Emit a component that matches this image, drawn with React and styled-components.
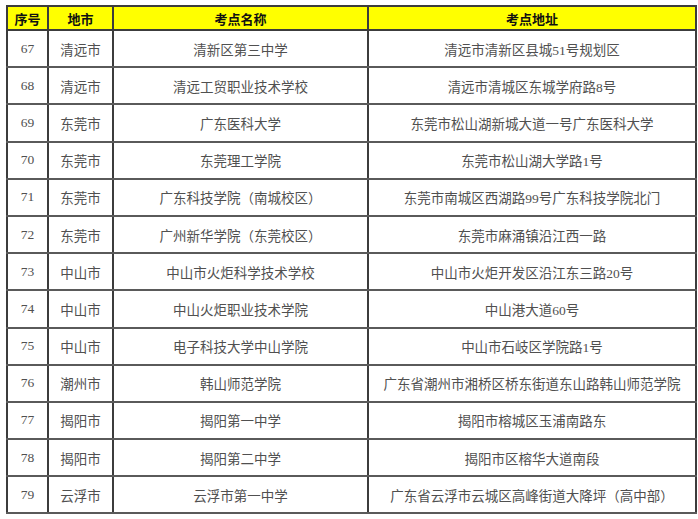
import React from 'react';
import styled, { createGlobalStyle } from 'styled-components';

const GlobalStyle = createGlobalStyle`
  html, body {
    margin: 0;
    padding: 0;
    background: #ffffff;
  }
`;

const Page = styled.div`
  padding: 5px 0 0 6px;
  width: 698px;
  height: 519px;
  box-sizing: border-box;
  font-family: 'Liberation Serif', 'Noto Sans CJK SC', serif;
`;

const Table = styled.table`
  border-collapse: collapse;
  table-layout: fixed;
  width: 689px;
`;

const Col = styled.col`
  width: ${(p) => p.$w}px;
`;

const HeadCell = styled.th`
  background: #ffff00;
  color: #111;
  font-weight: 700;
  font-size: 13px;
  height: 22px;
  padding: 0;
  border: 2px solid #3c3c3c;
  text-align: center;
  font-family: 'Noto Sans CJK SC', sans-serif;
`;

const Cell = styled.td`
  color: #505050;
  font-size: 13.5px;
  height: 35.2px;
  padding: 0;
  border: 2px solid #3c3c3c;
  border-top-color: #5a5a5a;
  border-bottom-color: #5a5a5a;
  text-align: center;
  white-space: nowrap;
  overflow: hidden;
`;

const columns = [
  { key: 'no', title: '序号', width: 41 },
  { key: 'city', title: '地市', width: 65 },
  { key: 'name', title: '考点名称', width: 255 },
  { key: 'addr', title: '考点地址', width: 328 },
];

const rows = [
  ['67', '清远市', '清新区第三中学', '清远市清新区县城51号规划区'],
  ['68', '清远市', '清远工贸职业技术学校', '清远市清城区东城学府路8号'],
  ['69', '东莞市', '广东医科大学', '东莞市松山湖新城大道一号广东医科大学'],
  ['70', '东莞市', '东莞理工学院', '东莞市松山湖大学路1号'],
  ['71', '东莞市', '广东科技学院（南城校区）', '东莞市南城区西湖路99号广东科技学院北门'],
  ['72', '东莞市', '广州新华学院（东莞校区）', '东莞市麻涌镇沿江西一路'],
  ['73', '中山市', '中山市火炬科学技术学校', '中山市火炬开发区沿江东三路20号'],
  ['74', '中山市', '中山火炬职业技术学院', '中山港大道60号'],
  ['75', '中山市', '电子科技大学中山学院', '中山市石岐区学院路1号'],
  ['76', '潮州市', '韩山师范学院', '广东省潮州市湘桥区桥东街道东山路韩山师范学院'],
  ['77', '揭阳市', '揭阳第一中学', '揭阳市榕城区玉浦南路东'],
  ['78', '揭阳市', '揭阳第二中学', '揭阳市区榕华大道南段'],
  ['79', '云浮市', '云浮市第一中学', '广东省云浮市云城区高峰街道大降坪（高中部）'],
];

export default function App() {
  return (
    <Page>
      <GlobalStyle />
      <Table>
        <colgroup>
          {columns.map((c) => (
            <Col key={c.key} $w={c.width} />
          ))}
        </colgroup>
        <thead>
          <tr>
            {columns.map((c) => (
              <HeadCell key={c.key}>{c.title}</HeadCell>
            ))}
          </tr>
        </thead>
        <tbody>
          {rows.map((r) => (
            <tr key={r[0]}>
              {r.map((v, i) => (
                <Cell key={i}>{v}</Cell>
              ))}
            </tr>
          ))}
        </tbody>
      </Table>
    </Page>
  );
}
